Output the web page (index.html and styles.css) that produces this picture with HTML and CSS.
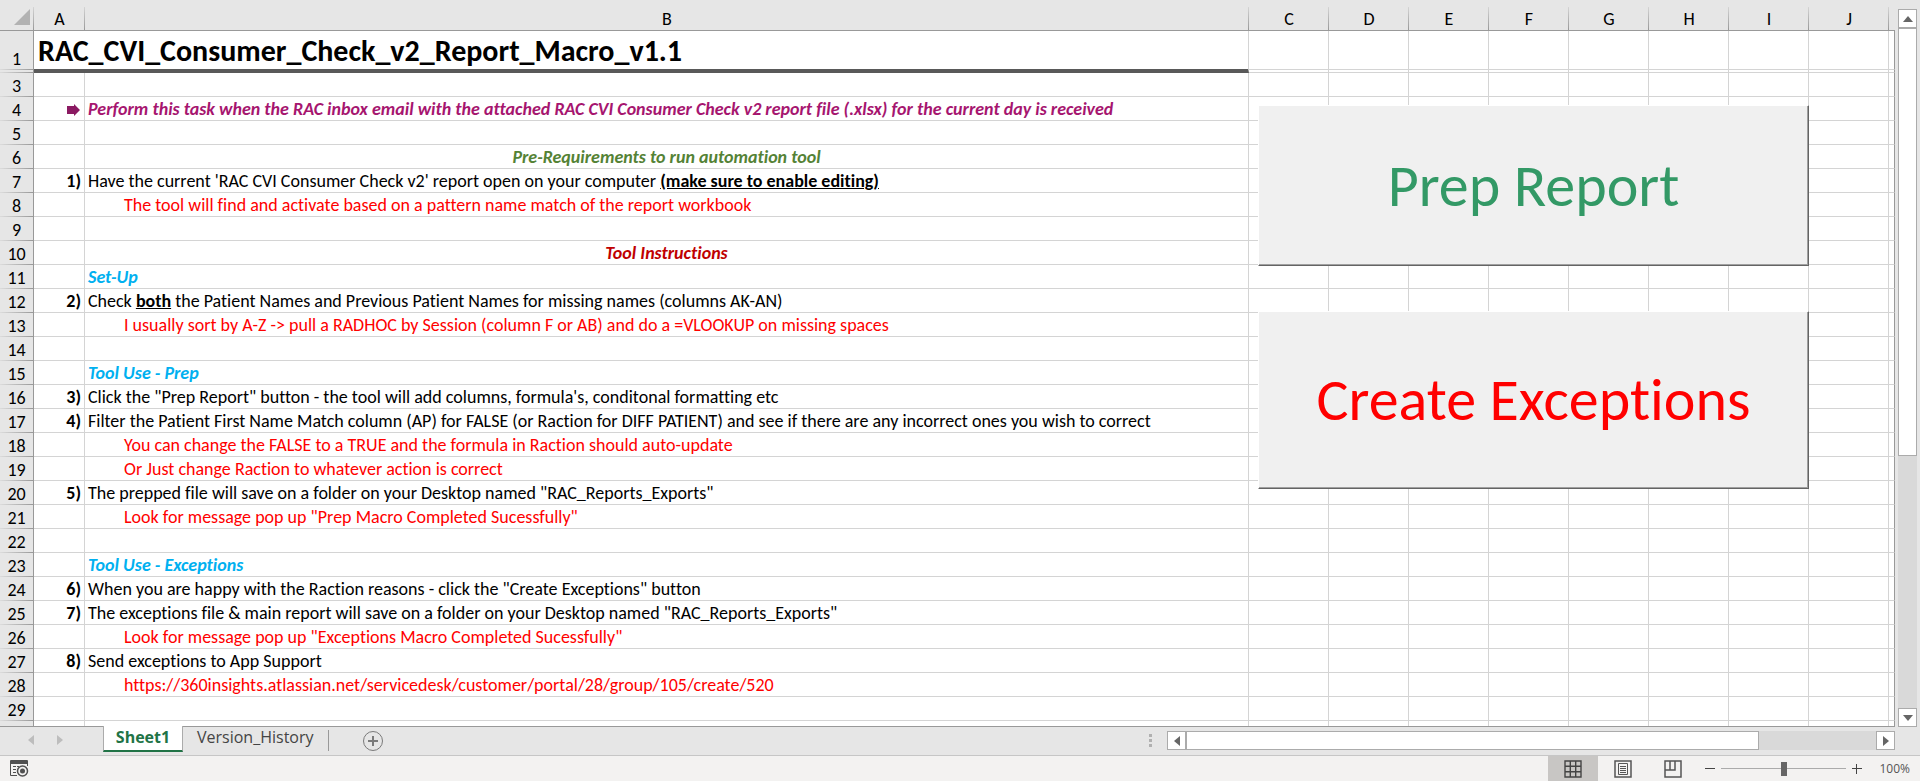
FILE: index.html
```html
<!DOCTYPE html>
<html lang="en">
<head>
<meta charset="utf-8">
<title>RAC_CVI_Consumer_Check_v2_Report_Macro_v1.1</title>
<link rel="stylesheet" href="styles.css">
</head>
<body>
<main class="workspace">
  <section class="sheet">
    <table class="grid">
      <colgroup><col class="w-num"><col class="w-a"><col><col class="w-c"><col class="w-c"><col class="w-c"><col class="w-c"><col class="w-c"><col class="w-c"><col class="w-c"><col class="w-c"><col class="w-edge"></colgroup>
      <thead>
        <tr>
          <th class="corner"><svg width="16" height="16" viewBox="0 0 16 16"><path d="M16 0V16H0Z" fill="#b2b2b2"/></svg></th>
          <th>A</th><th>B</th><th>C</th><th>D</th><th>E</th><th>F</th><th>G</th><th>H</th><th>I</th><th>J</th><th class="edge"></th>
        </tr>
      </thead>
      <tbody>
        <tr class="title-row"><th>1</th><td class="title" colspan="2" rowspan="2">RAC_CVI_Consumer_Check_v2_Report_Macro_v1.1</td><td class="rest" colspan="9"></td></tr>
        <tr class="thin"><th></th><td class="rest" colspan="9"></td></tr>
        <tr><th>3</th><td></td><td></td><td class="rest" colspan="9"></td></tr>
        <tr><th>4</th><td class="num"><svg class="arrow" width="14" height="12" viewBox="0 0 14 12"><path d="M0 2H7V0L13 6L7 12V10H0Z" fill="#8b1a62"/></svg></td><td class="strong purple">Perform this task when the RAC inbox email with the attached RAC CVI Consumer Check v2 report file (.xlsx) for the current day is received</td><td class="rest" colspan="9"></td></tr>
        <tr><th>5</th><td></td><td></td><td class="rest" colspan="9"></td></tr>
        <tr><th>6</th><td></td><td class="strong center green">Pre-Requirements to run automation tool</td><td class="rest" colspan="9"></td></tr>
        <tr><th>7</th><td class="num">1)</td><td>Have the current 'RAC CVI Consumer Check v2' report open on your computer <b><u>(make sure to enable editing)</u></b></td><td class="rest" colspan="9"></td></tr>
        <tr><th>8</th><td></td><td class="note">The tool will find and activate based on a pattern name match of the report workbook</td><td class="rest" colspan="9"></td></tr>
        <tr><th>9</th><td></td><td></td><td class="rest" colspan="9"></td></tr>
        <tr><th>10</th><td></td><td class="strong center crimson">Tool Instructions</td><td class="rest" colspan="9"></td></tr>
        <tr><th>11</th><td></td><td class="strong blue">Set-Up</td><td class="rest" colspan="9"></td></tr>
        <tr><th>12</th><td class="num">2)</td><td>Check <b><u>both</u></b> the Patient Names and Previous Patient Names for missing names (columns AK-AN)</td><td class="rest" colspan="9"></td></tr>
        <tr><th>13</th><td></td><td class="note">I usually sort by A-Z -&gt; pull a RADHOC by Session (column F or AB) and do a =VLOOKUP on missing spaces</td><td class="rest" colspan="9"></td></tr>
        <tr><th>14</th><td></td><td></td><td class="rest" colspan="9"></td></tr>
        <tr><th>15</th><td></td><td class="strong blue">Tool Use - Prep</td><td class="rest" colspan="9"></td></tr>
        <tr><th>16</th><td class="num">3)</td><td>Click the "Prep Report" button - the tool will add columns, formula's, conditonal formatting etc</td><td class="rest" colspan="9"></td></tr>
        <tr><th>17</th><td class="num">4)</td><td>Filter the Patient First Name Match column (AP) for FALSE (or Raction for DIFF PATIENT) and see if there are any incorrect ones you wish to correct</td><td class="rest" colspan="9"></td></tr>
        <tr><th>18</th><td></td><td class="note">You can change the FALSE to a TRUE and the formula in Raction should auto-update</td><td class="rest" colspan="9"></td></tr>
        <tr><th>19</th><td></td><td class="note">Or Just change Raction to whatever action is correct</td><td class="rest" colspan="9"></td></tr>
        <tr><th>20</th><td class="num">5)</td><td>The prepped file will save on a folder on your Desktop named "RAC_Reports_Exports"</td><td class="rest" colspan="9"></td></tr>
        <tr><th>21</th><td></td><td class="note">Look for message pop up "Prep Macro Completed Sucessfully"</td><td class="rest" colspan="9"></td></tr>
        <tr><th>22</th><td></td><td></td><td class="rest" colspan="9"></td></tr>
        <tr><th>23</th><td></td><td class="strong blue">Tool Use - Exceptions</td><td class="rest" colspan="9"></td></tr>
        <tr><th>24</th><td class="num">6)</td><td>When you are happy with the Raction reasons - click the "Create Exceptions" button</td><td class="rest" colspan="9"></td></tr>
        <tr><th>25</th><td class="num">7)</td><td>The exceptions file &amp; main report will save on a folder on your Desktop named "RAC_Reports_Exports"</td><td class="rest" colspan="9"></td></tr>
        <tr><th>26</th><td></td><td class="note">Look for message pop up "Exceptions Macro Completed Sucessfully"</td><td class="rest" colspan="9"></td></tr>
        <tr><th>27</th><td class="num">8)</td><td>Send exceptions to App Support</td><td class="rest" colspan="9"></td></tr>
        <tr><th>28</th><td></td><td class="note"><a href="https://360insights.atlassian.net/servicedesk/customer/portal/28/group/105/create/520">https://360insights.atlassian.net/servicedesk/customer/portal/28/group/105/create/520</a></td><td class="rest" colspan="9"></td></tr>
        <tr><th>29</th><td></td><td></td><td class="rest" colspan="9"></td></tr>
        <tr><th></th><td></td><td></td><td class="rest" colspan="9"></td></tr>
      </tbody>
    </table>
    <button class="macro prep" type="button">Prep Report</button>
    <button class="macro create" type="button">Create Exceptions</button>
  </section>
  <aside class="vscroll">
    <button class="step" type="button" aria-label="Scroll up"><svg width="10" height="6" viewBox="0 0 10 6"><path d="M0 6L5 0L10 6Z"/></svg></button>
    <div class="vtrack"><div class="vthumb"></div></div>
    <button class="step" type="button" aria-label="Scroll down"><svg width="10" height="6" viewBox="0 0 10 6"><path d="M0 0L5 6L10 0Z"/></svg></button>
  </aside>
</main>
<nav class="tabbar">
  <div class="tabnav">
    <button type="button" aria-label="Previous sheet"><svg width="6" height="10" viewBox="0 0 6 10"><path d="M6 0V10L0 5Z"/></svg></button>
    <button type="button" aria-label="Next sheet"><svg width="6" height="10" viewBox="0 0 6 10"><path d="M0 0V10L6 5Z"/></svg></button>
  </div>
  <button class="tab active" type="button">Sheet1</button>
  <button class="tab" type="button">Version_History</button>
  <span class="divider"></span>
  <button class="add" type="button" aria-label="New sheet"><svg width="22" height="22" viewBox="0 0 22 22" fill="none"><circle cx="11" cy="11" r="9.5" stroke="#7a7a7a"/><path d="M11 6V16M6 11H16" stroke="#7a7a7a" stroke-width="2"/></svg></button>
  <svg class="grip" width="3" height="13" viewBox="0 0 3 13"><path d="M0 0H3V3H0ZM0 5H3V8H0ZM0 10H3V13H0Z" fill="#b0b0b0"/></svg>
  <div class="hscroll">
    <button class="step" type="button" aria-label="Scroll left"><svg width="6" height="10" viewBox="0 0 6 10"><path d="M6 0V10L0 5Z"/></svg></button>
    <div class="htrack"><div class="hthumb"></div></div>
    <button class="step" type="button" aria-label="Scroll right"><svg width="6" height="10" viewBox="0 0 6 10"><path d="M0 0V10L6 5Z"/></svg></button>
  </div>
</nav>
<footer class="status">
  <button class="record" type="button" aria-label="Record macro"><svg width="19" height="17" viewBox="0 0 19 17" fill="none" stroke="#505050"><path d="M7 15.500H.5V.5H17.500V6M.5 3.500H17.500"/><path d="M.5 2H17.500" stroke-width="2"/><path d="M3 6.500H6M7 6.500H9M3 9.500H6M3 12.500H6"/><circle cx="12.500" cy="11" r="5" stroke-width="1.500" fill="#f3f2f1"/><circle cx="12.500" cy="11" r="2.500" fill="#505050" stroke="none"/></svg></button>
  <div class="views">
    <button class="on" type="button" aria-label="Normal view"><svg width="18" height="18" viewBox="0 0 18 18" fill="none" stroke="#444" stroke-width="1.400"><path d="M1 1H17V17H1ZM6.300 1V17M11.700 1V17M1 6.300H17M1 11.700H17"/></svg></button>
    <button type="button" aria-label="Page layout"><svg width="18" height="18" viewBox="0 0 18 18" fill="none" stroke="#555"><path d="M1 1H17V17H1Z" stroke-width="1.500"/><path d="M4.500 3.500H13.500V14.500H4.500ZM6 6.500H12M6 8.500H12M6 10.500H12M6 12.500H12"/></svg></button>
    <button type="button" aria-label="Page break preview"><svg width="18" height="18" viewBox="0 0 18 18" fill="none" stroke="#555" stroke-width="1.500"><path d="M1 1H17V17H1ZM1 10H11V1M6 1V10"/></svg></button>
  </div>
  <div class="zoom">
    <button type="button" aria-label="Zoom out"><svg width="10" height="10" viewBox="0 0 10 10"><path d="M0 4.500H10" stroke="#444"/></svg></button>
    <input type="range" min="0" max="200" value="100" aria-label="Zoom">
    <button type="button" aria-label="Zoom in"><svg width="10" height="10" viewBox="0 0 10 10"><path d="M0 4.500H10M4.500 0V10" stroke="#444"/></svg></button>
  </div>
  <button class="percent" type="button">100%</button>
</footer>
</body>
</html>
```

FILE: styles.css
```css
* { box-sizing: border-box; }

body {
  margin: 0;
  height: 100vh;
  display: flex;
  flex-direction: column;
  overflow: hidden;
  background: #e6e6e6;
  color: #000;
  font: 18px/21px Carlito, Lato, sans-serif;
  font-variant-ligatures: none;
}

button {
  margin: 0;
  padding: 0;
  border: 0;
  background: none;
  font: inherit;
  font-variant-ligatures: none;
  color: inherit;
}

svg { display: block; }

.workspace {
  flex: 1;
  min-height: 0;
  display: flex;
}

.sheet {
  position: relative;
  flex: 1;
  min-width: 0;
  overflow: hidden;
  border-bottom: 1px solid #999;
}

/* Grid */
.grid {
  width: 100%;
  table-layout: fixed;
  border-collapse: separate;
  border-spacing: 0;
}
.w-num { width: 34px; }
.w-a { width: 51px; }
.w-c { width: 80px; }
.w-edge { width: 6px; }

.grid th {
  padding: 2px 0 0;
  font-weight: 400;
  background: #e6e6e6;
}

.grid thead th {
  height: 31px;
  padding-top: 9px;
  border-bottom: 1px solid #999;
  background: linear-gradient(#d4d4d4, #999) right 7px / 1px 23px no-repeat #e6e6e6;
}
.grid thead .corner { padding: 4px 0 0 14px; }
.grid thead .edge { background: #e6e6e6; }

.grid tbody th {
  border-right: 1px solid #999;
  background: linear-gradient(90deg, #dcdcdc, #999) bottom / 100% 1px no-repeat #e6e6e6;
}

.grid td {
  height: 24px;
  padding: 2px 3px 0;
  border-right: 1px solid #d4d4d4;
  border-bottom: 1px solid #d4d4d4;
  background: #fff;
  white-space: nowrap;
  overflow: hidden;
}

.grid .rest {
  padding: 0;
  border-right: 1px solid #999;
  background: repeating-linear-gradient(90deg, transparent 0 79px, #d4d4d4 79px 80px) #fff;
}

.title-row th { height: 39px; vertical-align: bottom; }
.grid .title-row td { height: 39px; }
.grid .thin th, .grid .thin td { height: 3px; padding: 0; line-height: 0; }
.grid .title {
  padding: 2px 4px 0;
  border-bottom: 4px solid #595959;
  font-size: 30px;
  line-height: 36px;
  font-weight: 700;
}

.grid .num { text-align: right; font-weight: 700; }
.arrow { margin-left: auto; }
.strong { font-weight: 700; font-style: italic; }
.center { text-align: center; }
.purple { color: #a6156f; }
.green { color: #548235; }
.crimson { color: #c00000; }
.blue { color: #00b0f0; }
.grid .note { padding-left: 39px; color: #f00; }
.note a { color: inherit; text-decoration: none; }

/* Macro buttons float over the cells */
.macro {
  position: absolute;
  right: 86px;
  width: 551px;
  background: #f0f0f0;
  border: 1px solid #fff;
  border-right-color: #646464;
  border-bottom-color: #646464;
  box-shadow: inset -1px -1px #a0a0a0;
  font-size: 60px;
  line-height: 64px;
}
.prep { top: 105px; height: 161px; color: #339966; }
.create { top: 311px; height: 178px; color: #f00; }

/* Scroll bars */
.vscroll {
  width: 25px;
  padding: 9px 2px 0 3px;
  display: flex;
  flex-direction: column;
}
.step {
  width: 19px;
  height: 19px;
  flex: none;
  display: flex;
  align-items: center;
  justify-content: center;
  background: #fff;
  border: 1px solid #ababab;
  fill: #666;
}
.vtrack { flex: 1; width: 19px; background: #d9d9d9; }
.vthumb { height: 63%; background: #fff; border: 1px solid #ababab; }

.tabbar {
  height: 29px;
  display: flex;
  align-items: flex-start;
  padding-right: 25px;
  border-bottom: 1px solid #c6c6c6;
  font: 16px/24px "Open Sans", sans-serif;
}
.tabnav {
  width: 103px;
  height: 26px;
  padding-left: 28px;
  display: flex;
  align-items: center;
  gap: 23px;
  fill: #bdbdbd;
}
.tab { padding: 0 14px; height: 20px; line-height: 20px; color: #444; }
.tab.active {
  margin-top: -1px;
  width: 80px;
  padding: 0 0 2px;
  height: 26px;
  position: relative;
  background: #fff;
  border: 1px solid #ababab;
  border-width: 0 1px 2px;
  border-bottom-color: #217346;
  color: #217346;
  font-weight: 700;
}
.divider { width: 1px; height: 21px; margin-top: 3px; background: #999; }
.add { margin: 3px 0 0 33px; }
.grip { margin: 7px 15px 0 auto; }
.hscroll { width: 728px; margin-top: 4px; display: flex; }
.htrack { flex: 1; height: 19px; background: #d9d9d9; }
.hthumb { width: 83%; height: 19px; background: #fff; border: 1px solid #ababab; }

/* Status bar */
.status {
  height: 25px;
  display: flex;
  align-items: center;
  padding: 0 10px;
  background: #f3f2f1;
}
.views { height: 25px; margin-left: auto; display: flex; }
.views button { width: 50px; display: flex; align-items: center; justify-content: center; }
.views .on { background: #c8c6c4; }
.zoom { display: flex; align-items: center; gap: 6px; margin-left: 7px; }
.zoom input {
  appearance: none;
  width: 125px;
  height: 15px;
  margin: 0;
  background: linear-gradient(#ababab, #ababab) center / 100% 1px no-repeat;
}
.zoom input::-webkit-slider-thumb {
  appearance: none;
  width: 6px;
  height: 14px;
  background: #666;
}
.percent { margin-left: 17px; color: #555; font: 12px/20px "Open Sans", sans-serif; }
```
